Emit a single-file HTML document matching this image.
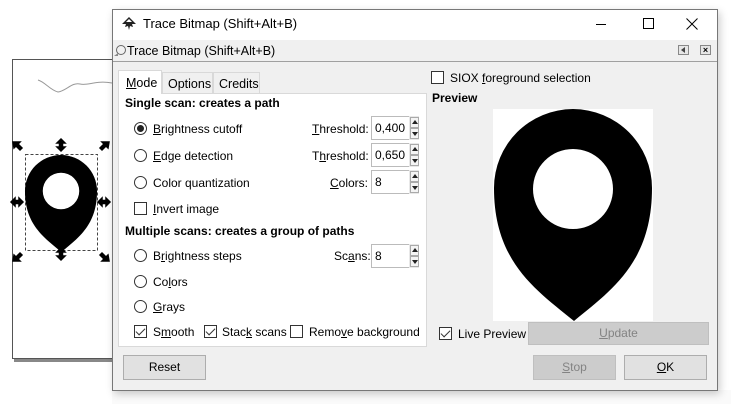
<!DOCTYPE html>
<html><head><meta charset="utf-8"><style>
*{margin:0;padding:0;box-sizing:border-box}
body{width:731px;height:404px;background:#f0f0f0;position:relative;overflow:hidden;font-family:"Liberation Sans",sans-serif;font-size:12px;color:#000}
.a{position:absolute;white-space:nowrap}
u{text-decoration:underline}
.rb{position:absolute;width:13px;height:13px;border:1px solid #333;border-radius:50%;background:#fff}
.rb.on::after{content:"";position:absolute;left:2px;top:2px;width:7px;height:7px;border-radius:50%;background:#222}
.cb{position:absolute;width:13px;height:13px;border:1px solid #333;background:#fff}
.cb.on::after{content:"";position:absolute;left:3px;top:0px;width:4px;height:8px;border:solid #333;border-width:0 1px 1px 0;transform:rotate(45deg)}
.sp{position:absolute;width:39px;height:24px;border:1px solid #bbb;background:#fff;padding:4px 0 0 3px}
.ar{position:absolute;width:10px;height:24px;background:#e8e8e8}
.ar i{position:absolute;left:1px;width:9px;height:11px;border:1px solid #aaa;background:#f4f4f4}
.ar i.u{top:1px}.ar i.d{top:12px}
.ar i::after{content:"";position:absolute;left:1px;border-left:3px solid transparent;border-right:3px solid transparent}
.ar i.u::after{top:2px;border-bottom:4px solid #222}
.ar i.d::after{top:3px;border-top:4px solid #222}
.btn{position:absolute;border:1px solid #adadad;background:#e1e1e1;text-align:center;line-height:22px}
.dis{background:#cccccc;border-color:#bfbfbf;color:#838383}
b{font-weight:bold}
</style></head><body>
<!-- canvas -->
<div class="a" style="left:0;top:0;width:112px;height:404px;background:#fff"></div>
<div class="a" style="left:14px;top:62px;width:98px;height:300px;background:#888"></div>
<div class="a" style="left:12px;top:59px;width:100px;height:300px;background:#fff;border:1px solid #555;border-right:none"></div>
<svg class="a" style="left:0;top:0" width="112" height="404">
<path d="M38 80 C45 82 50 90 58 92 C66 91 72 82 80 84 C88 86 96 80 112 83" fill="none" stroke="#999" stroke-width="1"/>
<rect x="25.5" y="154.5" width="72" height="96" fill="none" stroke="#444" stroke-dasharray="3,2"/>
<g transform="translate(61,191) scale(0.456) translate(-573,-188)">
<path d="M494 188 A79 79 0 0 1 652 188 C652 262 612 290 574 322 C536 290 494 262 494 188 Z M613 188 A40 40 0 0 0 533 188 A40 40 0 0 0 613 188 Z" fill="#000" fill-rule="evenodd"/>
</g>
<g fill="#000" stroke="#000" stroke-width="1.5" stroke-linejoin="miter">
<path d="M13 142 l7 0 l-2 2 l4 4 l-2 2 l-4 -4 l-2 2 z"/>
<path d="M109 142 l-7 0 l2 2 l-4 4 l2 2 l4 -4 l2 2 z"/>
<path d="M13 261 l7 0 l-2 -2 l4 -4 l-2 -2 l-4 4 l-2 -2 z"/>
<path d="M109 261 l-7 0 l2 -2 l-4 -4 l2 -2 l4 4 l2 -2 z"/>
<path d="M61 139 l4 4 h-2.5 v4 h2.5 l-4 4 l-4 -4 h2.5 v-4 h-2.5 z"/>
<path d="M61 248 l4 4 h-2.5 v4 h2.5 l-4 4 l-4 -4 h2.5 v-4 h-2.5 z"/>
<path d="M11 202 l4 -4 v2.5 h4 v-2.5 l4 4 l-4 4 v-2.5 h-4 v2.5 z"/>
<path d="M98 202 l4 -4 v2.5 h4 v-2.5 l4 4 l-4 4 v-2.5 h-4 v2.5 z"/>
</g>
</svg>
<!-- right bg -->
<div class="a" style="left:717px;top:0;width:14px;height:404px;background:#fff"></div>
<div class="a" style="left:112px;top:0;width:605px;height:9px;background:#fff"></div>
<div class="a" style="left:112px;top:390px;width:619px;height:14px;background:#fafafa"></div>
<!-- dialog -->
<div class="a" style="left:112px;top:9px;width:606px;height:382px;background:#f0f0f0;border:1px solid #777;box-shadow:2px 3px 8px rgba(0,0,0,.2)"></div>
<div class="a" style="left:113px;top:10px;width:604px;height:30px;background:#fff"></div>
<svg class="a" style="left:121px;top:16px" width="16" height="16"><path d="M8 1 L15 8 L11 8 L12 11 L9 10 L8 14 L7 10 L4 11 L5 8 L1 8 Z" fill="#222"/><path d="M5 6 L11 6 L8 3 Z" fill="#fff"/></svg>
<div class="a" style="left:143px;top:16px;font-size:13px">Trace Bitmap (Shift+Alt+B)</div>
<div class="a" style="left:596px;top:24px;width:10px;height:1px;background:#000"></div>
<div class="a" style="left:643px;top:18px;width:11px;height:11px;border:1px solid #000"></div>
<svg class="a" style="left:686px;top:18px" width="12" height="12"><path d="M0.5 0.5 L11.5 11.5 M11.5 0.5 L0.5 11.5" stroke="#000"/></svg>
<div class="a" style="left:113px;top:40px;width:604px;height:22px;background:#f0f0f0;border-bottom:1px solid #a0a0a0"></div>
<svg class="a" style="left:113px;top:44px" width="14" height="14"><circle cx="8" cy="6" r="4.5" fill="none" stroke="#666"/><path d="M1 12 L5 9 L5 12 Z" fill="#888"/></svg>
<div class="a" style="left:127px;top:44px;font-size:12.5px">Trace Bitmap (Shift+Alt+B)</div>
<div class="a" style="left:678px;top:45px;width:11px;height:10px;border:1px solid #888;background:#e6e6e6"></div>
<div class="a" style="left:681px;top:47px;border-right:4px solid #444;border-top:3px solid transparent;border-bottom:3px solid transparent"></div>
<div class="a" style="left:700px;top:45px;width:11px;height:10px;border:1px solid #888;background:#e6e6e6;font-size:9px;line-height:8px;text-align:center;font-weight:bold">×</div>
<!-- tabs -->
<div class="a" style="left:118px;top:93px;width:309px;height:254px;background:#fff;border:1px solid #d9d9d9"></div>
<div class="a" style="left:118px;top:70px;width:44px;height:24px;background:#fff;border:1px solid #d9d9d9;border-bottom:none;padding:5px 0 0 7px;font-size:12.5px"><u>M</u>ode</div>
<div class="a" style="left:162px;top:72px;width:51px;height:21px;background:#f0f0f0;border:1px solid #d9d9d9;border-bottom:none;padding:4px 0 0 5px;font-size:12.5px">Options</div>
<div class="a" style="left:213px;top:72px;width:47px;height:21px;background:#f0f0f0;border:1px solid #d9d9d9;border-bottom:none;padding:4px 0 0 5px;font-size:12.5px">Credits</div>
<div class="a" style="left:125px;top:96px"><b>Single scan: creates a path</b></div>
<div class="rb on" style="left:134px;top:122px"></div><div class="a" style="left:153px;top:122px"><u>B</u>rightness cutoff</div>
<div class="rb" style="left:134px;top:149px"></div><div class="a" style="left:153px;top:149px"><u>E</u>dge detection</div>
<div class="rb" style="left:134px;top:176px"></div><div class="a" style="left:153px;top:176px">Color quantization</div>
<div class="a" style="left:312px;top:122px"><u>T</u>hreshold:</div>
<div class="a" style="left:312px;top:149px">T<u>h</u>reshold:</div>
<div class="a" style="left:330px;top:176px"><u>C</u>olors:</div>
<div class="sp" style="left:371px;top:116px">0,400</div><div class="ar" style="left:409px;top:116px"><i class="u"></i><i class="d"></i></div>
<div class="sp" style="left:371px;top:143px">0,650</div><div class="ar" style="left:409px;top:143px"><i class="u"></i><i class="d"></i></div>
<div class="sp" style="left:371px;top:170px">8</div><div class="ar" style="left:409px;top:170px"><i class="u"></i><i class="d"></i></div>
<div class="cb" style="left:134px;top:202px"></div><div class="a" style="left:153px;top:202px"><u>I</u>nvert image</div>
<div class="a" style="left:125px;top:224px"><b>Multiple scans: creates a group of paths</b></div>
<div class="rb" style="left:134px;top:249px"></div><div class="a" style="left:153px;top:249px">B<u>r</u>ightness steps</div>
<div class="a" style="left:334px;top:249px">Sc<u>a</u>ns:</div>
<div class="sp" style="left:371px;top:244px">8</div><div class="ar" style="left:409px;top:244px"><i class="u"></i><i class="d"></i></div>
<div class="rb" style="left:134px;top:275px"></div><div class="a" style="left:153px;top:275px">Co<u>l</u>ors</div>
<div class="rb" style="left:134px;top:300px"></div><div class="a" style="left:153px;top:300px"><u>G</u>rays</div>
<div class="cb on" style="left:134px;top:325px"></div><div class="a" style="left:153px;top:325px">S<u>m</u>ooth</div>
<div class="cb on" style="left:204px;top:325px"></div><div class="a" style="left:222px;top:325px">Stac<u>k</u> scans</div>
<div class="cb" style="left:290px;top:325px"></div><div class="a" style="left:309px;top:325px">Remo<u>v</u>e background</div>
<div class="btn" style="left:123px;top:355px;width:83px;height:25px">Reset</div>
<!-- right -->
<div class="cb" style="left:431px;top:71px"></div><div class="a" style="left:450px;top:71px">SIOX <u>f</u>oreground selection</div>
<div class="a" style="left:432px;top:91px"><b>Preview</b></div>
<div class="a" style="left:493px;top:109px;width:160px;height:212px;background:#fff"></div>
<svg class="a" style="left:0;top:0" width="731" height="404"><path d="M494 188 A79 79 0 0 1 652 188 C652 262 612 290 574 321 C536 290 494 262 494 188 Z M613 189 A40 40 0 0 0 533 189 A40 40 0 0 0 613 189 Z" fill="#000" fill-rule="evenodd"/></svg>
<div class="cb on" style="left:439px;top:327px"></div><div class="a" style="left:458px;top:327px">Live Preview</div>
<div class="btn dis" style="left:528px;top:322px;width:181px;height:23px;line-height:21px"><u>U</u>pdate</div>
<div class="btn dis" style="left:533px;top:355px;width:83px;height:25px"><u>S</u>top</div>
<div class="btn" style="left:624px;top:355px;width:83px;height:25px"><u>O</u>K</div>
</body></html>
